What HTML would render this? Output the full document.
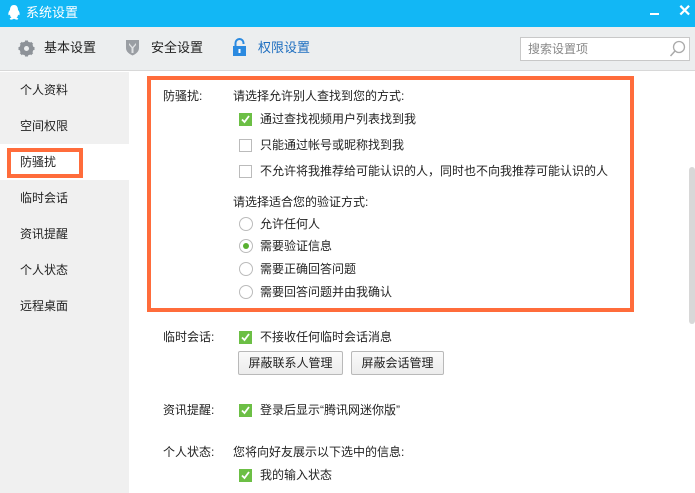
<!DOCTYPE html>
<html><head><meta charset="utf-8"><style>
*{margin:0;padding:0;box-sizing:border-box}
body{width:695px;height:493px;overflow:hidden;background:#fff;font-family:"Liberation Sans","Noto Sans CJK SC",sans-serif;font-size:12px;color:#222;position:relative}
.a{position:absolute;white-space:nowrap;line-height:16px}
.cb{position:absolute;width:13px;height:13px;border:1px solid #bbb;background:#fff}
.cb.on{background:#6cbf45;border-color:#6cbf45}
.rd{position:absolute;width:14px;height:14px;border:1px solid #bbb;border-radius:50%;background:#fff}
.rd.on::after{content:"";position:absolute;left:3px;top:3px;width:6px;height:6px;border-radius:50%;background:#58b030}
.side{position:absolute;left:20px;font-size:12px}
.btn{position:absolute;height:24px;border:1px solid #b9b9b9;border-radius:2px;background:linear-gradient(#fafafa,#ececec);text-align:center;line-height:22px}
</style></head><body>
<div style="position:absolute;left:0;top:0;width:695px;height:27px;background:#12b7f5"></div>
<svg class="a" style="left:7px;top:5px" width="14" height="16" viewBox="0 0 14 16"><path d="M7 0C4 0 3 2.5 3 5C2 6 1 8 1.5 10C2 10.5 2.5 10 3 9.5C3 11 3.5 12 4.5 12.5C3 13 2 14 3.5 14.5C5 15 6 14 7 13.8C8 14 9 15 10.5 14.5C12 14 11 13 9.5 12.5C10.5 12 11 11 11 9.5C11.5 10 12 10.5 12.5 10C13 8 12 6 11 5C11 2.5 10 0 7 0Z" fill="#fff"/></svg>
<div class="a" style="left:26px;top:5px;color:#fff;font-size:13px">系统设置</div>
<div style="position:absolute;left:650px;top:13px;width:9px;height:2px;background:#fff"></div>
<div class="a" style="left:678px;top:4px;color:#fff;font-size:16px;font-weight:bold">✕</div>
<div style="position:absolute;left:0;top:27px;width:695px;height:44px;background:#eceeef;border-bottom:1px solid #d8d8d8"></div>
<svg class="a" style="left:18px;top:40px" width="17" height="17" viewBox="0 0 17 17"><circle cx="8.5" cy="8.5" r="5.5" fill="none" stroke="#8d9298" stroke-width="3"/><g stroke="#8d9298" stroke-width="3"><line x1="8.5" y1="0.5" x2="8.5" y2="16.5"/><line x1="0.5" y1="8.5" x2="16.5" y2="8.5"/><line x1="2.8" y1="2.8" x2="14.2" y2="14.2"/><line x1="14.2" y1="2.8" x2="2.8" y2="14.2"/></g><circle cx="8.5" cy="8.5" r="2.5" fill="#eceeef"/></svg>
<div class="a" style="left:44px;top:40px;font-size:13px">基本设置</div>
<svg class="a" style="left:125px;top:39px" width="15" height="17" viewBox="0 0 15 17"><path d="M1 1H14V9C14 13 10 15.5 7.5 16.5C5 15.5 1 13 1 9Z" fill="#9a9ea3"/><path d="M4 4L7.5 8L11 4V6L8.5 9V14H6.5V9L4 6Z" fill="#e0e2e4"/></svg>
<div class="a" style="left:151px;top:40px;font-size:13px">安全设置</div>
<svg class="a" style="left:232px;top:38px" width="15" height="18" viewBox="0 0 15 18"><path d="M3.5 8V5A4 4 0 0 1 11.5 5V6" fill="none" stroke="#2b8ae0" stroke-width="2"/><rect x="1" y="8" width="13" height="10" fill="#2b8ae0"/><rect x="6.5" y="11" width="2" height="4" fill="#fff"/></svg>
<div class="a" style="left:258px;top:40px;font-size:13px;color:#1f6fc0">权限设置</div>
<div style="position:absolute;left:520px;top:37px;width:170px;height:24px;background:#fff;border:1px solid #c8c8c8"></div>
<div class="a" style="left:528px;top:41px;color:#888;font-size:12px">搜索设置项</div>
<svg class="a" style="left:669px;top:40px" width="17" height="18" viewBox="0 0 17 18"><circle cx="10" cy="7" r="5.5" fill="none" stroke="#aaa" stroke-width="1.3"/><line x1="6" y1="11" x2="1.5" y2="16" stroke="#aaa" stroke-width="1.5"/></svg>
<div style="position:absolute;left:0;top:72px;width:129px;height:421px;background:#f0f0f0"></div>
<div style="position:absolute;left:0;top:144px;width:129px;height:36px;background:#fff"></div>
<div class="side a" style="top:82px">个人资料</div>
<div class="side a" style="top:118px">空间权限</div>
<div class="side a" style="top:154px">防骚扰</div>
<div class="side a" style="top:190px">临时会话</div>
<div class="side a" style="top:226px">资讯提醒</div>
<div class="side a" style="top:262px">个人状态</div>
<div class="side a" style="top:298px">远程桌面</div>
<div style="position:absolute;left:7px;top:148px;width:76px;height:30px;border:4px solid #ff6c3b"></div>
<div style="position:absolute;left:147px;top:76px;width:487px;height:236px;border:4px solid #ff6c3b"></div>
<div style="position:absolute;left:689px;top:167px;width:6px;height:157px;background:#d8d8d8;border-radius:3px"></div>
<div class="a" style="left:163px;top:88px">防骚扰:</div>
<div class="a" style="left:233px;top:88px">请选择允许别人查找到您的方式:</div>
<div class="cb on" style="left:239px;top:113px"></div>
<div class="a" style="left:260px;top:111px">通过查找视频用户列表找到我</div>
<div class="cb" style="left:239px;top:139px"></div>
<div class="a" style="left:260px;top:137px">只能通过帐号或昵称找到我</div>
<div class="cb" style="left:239px;top:165px"></div>
<div class="a" style="left:260px;top:163px">不允许将我推荐给可能认识的人，同时也不向我推荐可能认识的人</div>
<div class="a" style="left:233px;top:194px">请选择适合您的验证方式:</div>
<div class="rd" style="left:239px;top:217px"></div>
<div class="a" style="left:260px;top:216px">允许任何人</div>
<div class="rd on" style="left:239px;top:239px"></div>
<div class="a" style="left:260px;top:238px">需要验证信息</div>
<div class="rd" style="left:239px;top:262px"></div>
<div class="a" style="left:260px;top:261px">需要正确回答问题</div>
<div class="rd" style="left:239px;top:285px"></div>
<div class="a" style="left:260px;top:284px">需要回答问题并由我确认</div>
<div class="a" style="left:163px;top:329px">临时会话:</div>
<div class="cb on" style="left:239px;top:331px"></div>
<div class="a" style="left:260px;top:329px">不接收任何临时会话消息</div>
<div class="btn" style="left:238px;top:351px;width:105px">屏蔽联系人管理</div>
<div class="btn" style="left:351px;top:351px;width:93px">屏蔽会话管理</div>
<div class="a" style="left:163px;top:402px">资讯提醒:</div>
<div class="cb on" style="left:239px;top:404px"></div>
<div class="a" style="left:260px;top:402px">登录后显示“腾讯网迷你版”</div>
<div class="a" style="left:163px;top:444px">个人状态:</div>
<div class="a" style="left:233px;top:444px">您将向好友展示以下选中的信息:</div>
<div class="cb on" style="left:239px;top:469px"></div>
<div class="a" style="left:260px;top:467px">我的输入状态</div>
<svg style="position:absolute;left:0;top:0" width="695" height="493">
<g fill="none" stroke="#fff" stroke-width="1.8"><path d="M242 119.5L244.5 122L249 116"/><path d="M242 337.5L244.5 340L249 334"/><path d="M242 410.5L244.5 413L249 407"/><path d="M242 475.5L244.5 478L249 472"/></g></svg>
</body></html>
